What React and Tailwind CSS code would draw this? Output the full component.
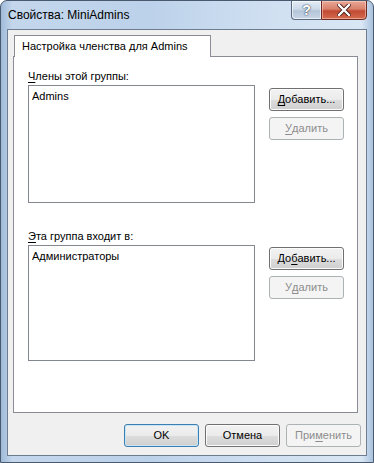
import React from "react";

const F = "font-['Liberation_Sans',Arial,sans-serif]";

function Btn({ children, disabled, def, className = "" }) {
  const base =
    "w-[75px] h-[23px] rounded-[3px] border flex items-center justify-center text-[11px] leading-none";
  if (disabled)
    return (
      <div className={`${base} border-[#adb2b5] bg-[#f4f4f4] text-[#8d8d8d] ${className}`}>
        {children}
      </div>
    );
  return (
    <div
      className={`${base} ${
        def ? "border-[#3c7fb1] shadow-[inset_0_0_0_1px_#c7e5f7]" : "border-[#707070] shadow-[inset_0_0_0_1px_#fcfcfc]"
      } bg-[linear-gradient(#f2f2f2_0%,#ebebeb_50%,#dddddd_51%,#cfcfcf_100%)] text-black ${className}`}
    >
      {children}
    </div>
  );
}

const U = ({ children }) => <span className="underline underline-offset-2">{children}</span>;

export default function App() {
  return (
    <div
      className={`${F} relative w-[374px] h-[463px] rounded-t-[7px] border border-[#4a5a6e] bg-[linear-gradient(90deg,#9fbad8_0%,#c3d6ec_3%,#bcd2ea_40%,#cfdff1_70%,#d9e6f4_97%,#a8c1dd_100%)] flex flex-col overflow-hidden`}
    >
      {/* title bar */}
      <div className="h-[28px] shrink-0 flex items-center pl-[7px] text-[12px] text-black">
        Свойства: MiniAdmins
      </div>

      {/* caption buttons */}
      <div className="absolute top-[-1px] right-[6px] flex">
        <div className="w-[30px] h-[20px] rounded-bl-[4px] border border-[#5a6a80] border-r-0 bg-[linear-gradient(#e4ecf5_0%,#ccd9e8_45%,#b4c4d8_55%,#c9d7e6_100%)] flex items-center justify-center shadow-[inset_0_0_0_1px_rgba(255,255,255,0.6)]">
          <span className="text-[14px] font-bold text-white [text-shadow:0_0_2px_#3a4656,0_0_1px_#3a4656] leading-none">?</span>
        </div>
        <div className="w-[46px] h-[20px] rounded-br-[4px] border border-[#6b2a22] bg-[linear-gradient(#e9a997_0%,#d8806b_45%,#c24a34_55%,#d46a4e_100%)] flex items-center justify-center shadow-[inset_0_0_0_1px_rgba(255,220,210,0.5)]">
          <svg width="14" height="12" viewBox="0 0 14 12">
            <path d="M2 1 L12 11 M12 1 L2 11" stroke="#3a1410" strokeWidth="4" strokeLinecap="square" />
            <path d="M2 1 L12 11 M12 1 L2 11" stroke="#ffffff" strokeWidth="2.4" strokeLinecap="square" />
          </svg>
        </div>
      </div>

      {/* client area */}
      <div className="mx-[6px] h-[427px] shrink-0 border border-[#6d7c8f] bg-[#f0f0f0] flex flex-col">
        <div className="pl-[5px] pt-[5px] pr-[8px]">
          {/* tab header */}
          <div className="relative z-10 ml-[1px] w-[197px] h-[22px] border border-b-0 border-[#898c95] bg-white flex items-center pl-[7px] text-[11px] text-black">
            Настройка членства для Admins
          </div>
          {/* tab panel */}
          <div className="-mt-px w-[345px] h-[357px] border border-[#898c95] bg-white pl-[14px]">
            <div className="pt-[12px] h-[28px] text-[11px] leading-[14px] text-black">
              <U>Ч</U>лены этой группы:
            </div>
            <div className="flex">
              <div className="w-[227px] h-[118px] border border-[#828790] bg-white px-[3px] pt-[3px] text-[11px] leading-[14px]">
                Admins
              </div>
              <div className="ml-[14px] mt-[3px] flex flex-col gap-[6px]">
                <Btn>
                  <U>Д</U>обавить...
                </Btn>
                <Btn disabled>
                  <U>У</U>далить
                </Btn>
              </div>
            </div>
            <div className="pt-[26px] h-[42px] text-[11px] leading-[14px] text-black">
              <U>Э</U>та группа входит в:
            </div>
            <div className="flex">
              <div className="w-[227px] h-[116px] border border-[#828790] bg-white px-[3px] pt-[3px] text-[11px] leading-[14px]">
                Администраторы
              </div>
              <div className="ml-[14px] mt-[2px] flex flex-col gap-[6px]">
                <Btn>
                  До<U>б</U>авить...
                </Btn>
                <Btn disabled>
                  У<U>д</U>алить
                </Btn>
              </div>
            </div>
          </div>
        </div>
        {/* bottom buttons */}
        <div className="mt-[11px] pl-[116px] flex gap-[6px]">
          <Btn def>OK</Btn>
          <Btn>Отмена</Btn>
          <Btn disabled>
            При<U>м</U>енить
          </Btn>
        </div>
      </div>
    </div>
  );
}
